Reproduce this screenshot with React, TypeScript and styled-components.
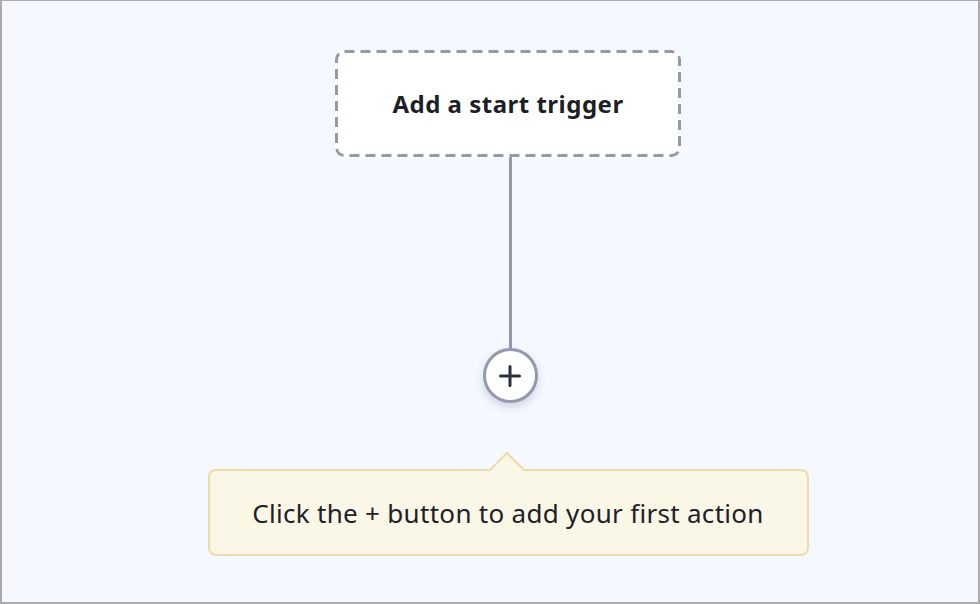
import React from "react";
import styled, { createGlobalStyle } from "styled-components";

const Global = createGlobalStyle`
  html, body { margin: 0; padding: 0; }
  body { font-family: "Noto Sans", sans-serif; }
  * { box-sizing: border-box; }
`;

const dashedBorder =
  "data:image/svg+xml," +
  encodeURIComponent(
    `<svg xmlns='http://www.w3.org/2000/svg' width='346' height='107'><rect x='1.5' y='1.5' width='343' height='104' rx='8' ry='8' fill='none' stroke='#9599ad' stroke-width='3' stroke-dasharray='10 6'/></svg>`
  );

const Canvas = styled.div`
  width: 980px;
  height: 604px;
  background: #f5f8ff;
  border: 2px solid #ababab;
  border-top-width: 1px;
  display: flex;
  flex-direction: column;
  align-items: center;
  padding-top: 49px;
  padding-left: 36px;
`;

const TriggerBox = styled.div`
  width: 346px;
  height: 107px;
  background: #ffffff url("${dashedBorder}") no-repeat;
  border-radius: 9px;
  display: flex;
  align-items: center;
  justify-content: center;
  font-family: "Noto Sans", sans-serif;
  font-weight: 700;
  font-size: 24px;
  color: #1c1f26;
  letter-spacing: 0.5px;
`;

const Connector = styled.div`
  width: 3px;
  height: 191px;
  margin-left: 4px;
  background: #9599ad;
`;

const AddButton = styled.button`
  width: 55px;
  height: 55px;
  margin-left: 4px;
  border-radius: 50%;
  background: #ffffff;
  border: 3px solid #9599ad;
  box-shadow: 0 4px 8px rgba(40, 50, 80, 0.18);
  display: flex;
  align-items: center;
  justify-content: center;
  padding: 0;
  cursor: pointer;
`;

const Tooltip = styled.div`
  position: relative;
  margin-top: 66px;
  width: 601px;
  height: 87px;
  background: #fbf7e6;
  border: 2px solid #ecdcab;
  border-radius: 8px;
  display: flex;
  align-items: center;
  justify-content: center;
  font-family: "Noto Sans", sans-serif;
  font-size: 26px;
  color: #1e2129;
  letter-spacing: 0.3px;

  &::before {
    content: "";
    position: absolute;
    top: -14px;
    left: 50%;
    width: 24px;
    height: 24px;
    margin-left: -14px;
    background: #fbf7e6;
    border-top: 2px solid #ecdcab;
    border-left: 2px solid #ecdcab;
    transform: rotate(45deg);
  }
`;

const TooltipText = styled.span`
  position: relative;
  margin-top: 1px;
`;

export default function App() {
  return (
    <>
      <Global />
      <Canvas>
        <TriggerBox>Add a start trigger</TriggerBox>
        <Connector />
        <AddButton aria-label="Add action">
          <svg width="22" height="22" viewBox="0 0 22 22">
            <path d="M11 1.5 V20.5 M1.5 11 H20.5" stroke="#2a2f3d" strokeWidth="3" strokeLinecap="round" />
          </svg>
        </AddButton>
        <Tooltip>
          <TooltipText>Click the + button to add your first action</TooltipText>
        </Tooltip>
      </Canvas>
    </>
  );
}
